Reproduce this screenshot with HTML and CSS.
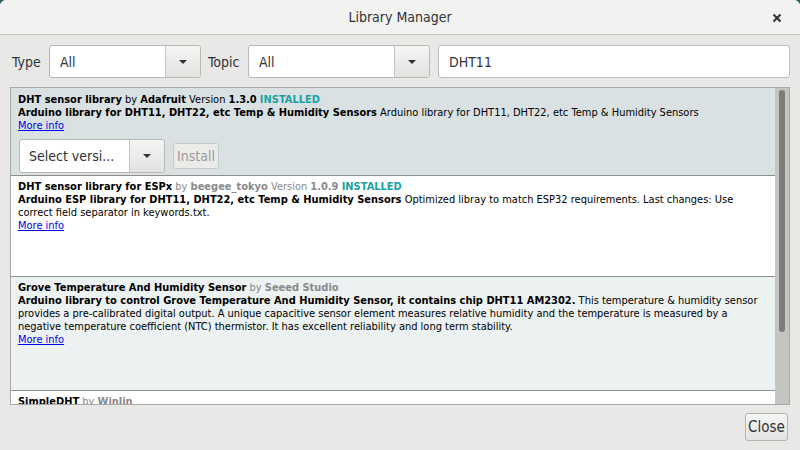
FILE: index.html
```html
<!DOCTYPE html>
<html>
<head>
<meta charset="utf-8">
<link rel="stylesheet" href="styles.css">
</head>
<body>
<div class="window">
  <div class="titlebar">
    <span class="title">Library Manager</span>
    <svg class="xicon" width="10" height="10" viewBox="0 0 10 10"><path d="M1.5 1.5 L8.5 8.5 M8.5 1.5 L1.5 8.5" stroke="#2e3436" stroke-width="2" fill="none"/></svg>
  </div>
  <div class="toolbar">
    <span class="label label-type">Type</span>
    <div class="combo combo-type"><span class="combo-text">All</span><span class="combo-arrow"><span class="tri"></span></span></div>
    <span class="label label-topic">Topic</span>
    <div class="combo combo-topic"><span class="combo-text">All</span><span class="combo-arrow"><span class="tri"></span></span></div>
    <div class="search">DHT11</div>
  </div>
  <div class="list">
    <div class="items">
      <div class="item item-sel">
        <div class="line"><b>DHT sensor library</b> by <b>Adafruit</b> Version <b>1.3.0</b> <b class="inst">INSTALLED</b></div>
        <div class="line"><b>Arduino library for DHT11, DHT22, etc Temp &amp; Humidity Sensors</b> Arduino library for DHT11, DHT22, etc Temp &amp; Humidity Sensors</div>
        <div class="line"><a class="more">More info</a></div>
        <div class="actions">
          <div class="combo combo-ver"><span class="combo-text">Select versi...</span><span class="combo-arrow"><span class="tri"></span></span></div>
          <div class="btn-install">Install</div>
        </div>
      </div>
      <div class="item item-2">
        <div class="line"><b>DHT sensor library for ESPx</b> <span class="g">by</span> <b class="g">beegee_tokyo</b> <span class="g">Version</span> <b class="g">1.0.9</b> <b class="inst">INSTALLED</b></div>
        <div class="desc"><b>Arduino ESP library for DHT11, DHT22, etc Temp &amp; Humidity Sensors</b> Optimized libray to match ESP32 requirements. Last changes: Use correct field separator in keywords.txt.</div>
        <div class="line"><a class="more">More info</a></div>
      </div>
      <div class="item item-3">
        <div class="line"><b>Grove Temperature And Humidity Sensor</b> <span class="g">by</span> <b class="g">Seeed Studio</b></div>
        <div class="desc"><b>Arduino library to control Grove Temperature And Humidity Sensor, it contains chip DHT11 AM2302.</b> This temperature &amp; humidity sensor provides a pre-calibrated digital output. A unique capacitive sensor element measures relative humidity and the temperature is measured by a negative temperature coefficient (NTC) thermistor. It has excellent reliability and long term stability.</div>
        <div class="line"><a class="more">More info</a></div>
      </div>
      <div class="item item-4">
        <div class="line"><b>SimpleDHT</b> <span class="g">by</span> <b class="g">Winlin</b></div>
      </div>
    </div>
    <div class="scrollbar"><div class="thumb"></div></div>
  </div>
  <div class="footer">
    <div class="btn-close">Close</div>
  </div>
</div>
</body>
</html>
```

FILE: styles.css
```css
html, body {
  margin: 0;
  padding: 0;
  background: #1d5e5e;
}
.window {
  width: 800px;
  height: 450px;
  background: #e8e8e7;
  display: flex;
  flex-direction: column;
  border-radius: 6px 6px 0 0;
  overflow: hidden;
  font-family: "DejaVu Sans Condensed", "DejaVu Sans", sans-serif;
  color: #2e3436;
}
.titlebar {
  height: 34px;
  border-bottom: 1px solid #c3c3c0;
  background: #f2f2f1;
  display: flex;
  align-items: center;
  justify-content: center;
  position: relative;
  flex-shrink: 0;
}
.title {
  font-size: 14px;
  color: #2e3436;
}
.xicon {
  position: absolute;
  right: 18px;
  top: 13px;
}
.toolbar {
  display: flex;
  align-items: center;
  padding: 10px 10px 0 12px;
  height: 33px;
  flex-shrink: 0;
}
.label {
  font-size: 14px;
  color: #2e3436;
  flex-shrink: 0;
}
.label-type { width: 37px; }
.label-topic { width: 40px; }
.combo {
  display: flex;
  height: 31px;
  border: 1px solid #b8b8b5;
  border-radius: 3px;
  background: #fff;
  box-sizing: content-box;
  flex-shrink: 0;
}
.combo-text {
  flex: 1;
  display: flex;
  align-items: center;
  padding-left: 10px;
  font-size: 14px;
  color: #2e3436;
}
.combo-arrow {
  width: 34px;
  border-left: 1px solid #c4c4c1;
  background: linear-gradient(#f5f5f4, #e2e2e0);
  border-radius: 0 3px 3px 0;
  display: flex;
  align-items: center;
  justify-content: center;
}
.tri {
  width: 0;
  height: 0;
  border-left: 4px solid transparent;
  border-right: 4px solid transparent;
  border-top: 4px solid #2e3436;
}
.combo-type {
  width: 150px;
  margin-right: 7px;
}
.combo-topic {
  width: 180px;
  margin-right: 8px;
}
.search {
  flex: 1;
  height: 31px;
  border: 1px solid #bdbdba;
  border-radius: 3px;
  background: #fff;
  display: flex;
  align-items: center;
  padding-left: 10px;
  font-size: 14px;
  color: #2e3436;
}
.list {
  margin: 9px 10px 0 10px;
  height: 316px;
  border: 1px solid #a8a8a6;
  display: flex;
  overflow: hidden;
  background: #fff;
  flex-shrink: 0;
}
.items {
  flex: 1;
  min-width: 0;
  overflow: hidden;
  display: flex;
  flex-direction: column;
  font-family: "DejaVu Sans", sans-serif;
  font-size: 9.9px;
  color: #000;
}
.item {
  box-sizing: border-box;
  padding: 4px 8px 0 7px;
  border-bottom: 1px solid #8f8f8f;
  flex-shrink: 0;
}
.item-sel { height: 88px; background: #d9e1e2; padding-top: 5px; }
.item-2 { height: 101px; background: #fff; }
.item-3 { height: 114px; background: #ecf1f1; }
.item-4 { height: 30px; background: #fff; border-bottom: none; }
.line, .desc {
  line-height: 13px;
  white-space: nowrap;
}
.desc {
  white-space: normal;
  width: 748px;
}
.g { color: #8a8a8a; }
.inst { color: #1aa1a4; }
.more {
  color: #0000ee;
  text-decoration: underline;
}
.actions {
  display: flex;
  align-items: center;
  margin-top: 7px;
  padding-left: 1px;
}
.combo-ver {
  width: 144px;
  height: 32px;
  margin-right: 8px;
  font-family: "DejaVu Sans Condensed", "DejaVu Sans", sans-serif;
}
.combo-ver .combo-text { font-size: 14px; padding-left: 9px; }
.btn-install {
  width: 44px;
  height: 24px;
  border: 1px solid #c9c9c7;
  border-radius: 3px;
  background: #ebebea;
  color: #9a9a9a;
  font-family: "DejaVu Sans Condensed", "DejaVu Sans", sans-serif;
  font-size: 14px;
  display: flex;
  align-items: center;
  justify-content: center;
}
.scrollbar {
  width: 14px;
  background: #c4c4c1;
  flex-shrink: 0;
  display: flex;
  justify-content: center;
  align-items: flex-start;
  padding-top: 2px;
  box-sizing: border-box;
}
.thumb {
  width: 6px;
  height: 242px;
  background: #7c7c7c;
  border-radius: 3px;
}
.footer {
  display: flex;
  justify-content: flex-end;
  padding: 8px 12px 0 0;
}
.btn-close {
  width: 41px;
  height: 26px;
  border: 1px solid #b3b3b0;
  border-radius: 3px;
  background: linear-gradient(#f5f5f4, #e4e4e2);
  display: flex;
  align-items: center;
  justify-content: center;
  font-size: 15px;
  color: #2e3436;
}
```
